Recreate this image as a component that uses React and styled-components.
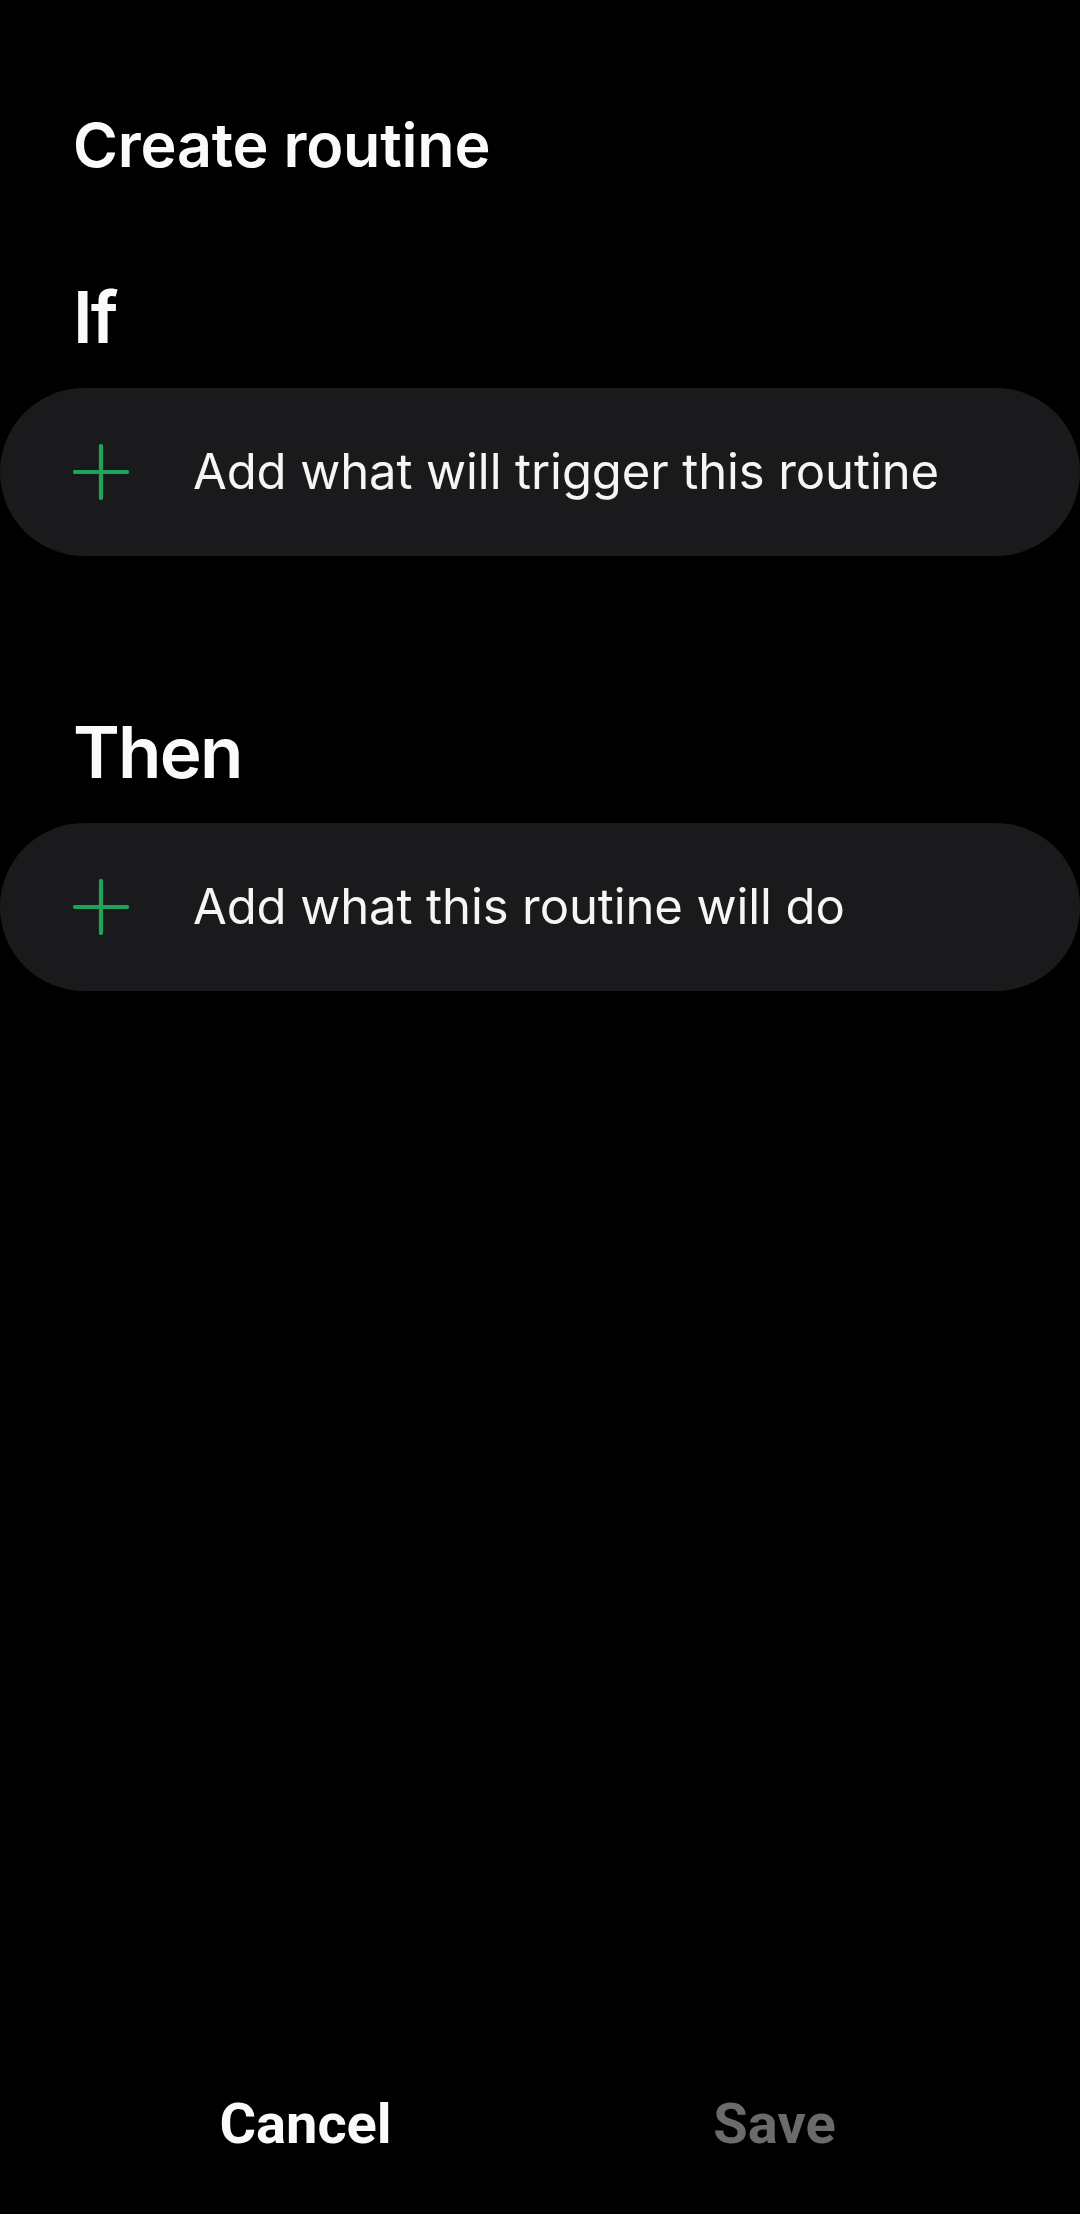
import React from 'react';
import styled, { createGlobalStyle } from 'styled-components';

const GlobalStyle = createGlobalStyle`
  html, body {
    margin: 0;
    padding: 0;
    background: #000;
  }
  body {
    font-family: Inter, Roboto, "Noto Sans", sans-serif;
    color: #fafafa;
  }
`;

const PlusIcon = () => (
  <svg width="56" height="56" viewBox="0 0 56 56" fill="none">
    <path d="M28 2v52M2 28h52" stroke="#1fa35b" strokeWidth="4.2" strokeLinecap="round" />
  </svg>
);

const AddCard = ({ label }) => (
  <Card>
    <IconSlot>
      <PlusIcon />
    </IconSlot>
    <CardText>{label}</CardText>
  </Card>
);

const App = () => {
  return (
    <>
      <GlobalStyle />
      <Page>
        <Title>Create routine</Title>
        <Section first>
          <SectionLabel>If</SectionLabel>
          <AddCard label="Add what will trigger this routine" />
        </Section>
        <Section>
          <SectionLabel>Then</SectionLabel>
          <AddCard label="Add what this routine will do" />
        </Section>
        <Footer>
          <FooterButton>Cancel</FooterButton>
          <FooterButton disabled>Save</FooterButton>
        </Footer>
      </Page>
    </>
  );
};

const Page = styled.div`
  min-height: 100vh;
  display: flex;
  flex-direction: column;
  padding-top: 109px;
  box-sizing: border-box;
`;

const Title = styled.h1`
  margin: 0;
  padding-left: 73px;
  font-size: 61px;
  line-height: 72px;
  font-weight: 600;
  letter-spacing: -0.2px;
`;

const Section = styled.section`
  display: flex;
  flex-direction: column;
  gap: 29px;
  margin-top: ${props => (props.first ? '94px' : '154px')};
`;

const SectionLabel = styled.h2`
  margin: 0;
  padding-left: 73px;
  font-size: 71px;
  line-height: 84px;
  font-weight: 600;
  letter-spacing: -1.8px;
`;

const Card = styled.div`
  height: 168px;
  border-radius: 84px;
  background: #1a1a1c;
  display: flex;
  align-items: center;
  padding-left: 73px;
  gap: 64px;
`;

const IconSlot = styled.div`
  width: 56px;
  height: 56px;
  display: flex;
`;

const CardText = styled.span`
  font-size: 49px;
  line-height: 60px;
  font-weight: 400;
  letter-spacing: -0.1px;
  color: #f5f5f5;
`;

const Footer = styled.div`
  margin-top: auto;
  display: flex;
  padding: 0 71px 58px;
`;

const FooterButton = styled.button`
  flex: 1;
  background: none;
  border: none;
  padding: 0;
  font-family: Roboto, "Noto Sans", sans-serif;
  font-size: 56px;
  line-height: 64px;
  font-weight: 700;
  color: ${props => (props.disabled ? '#6b6b6b' : '#fafafa')};
`;

export default App;
